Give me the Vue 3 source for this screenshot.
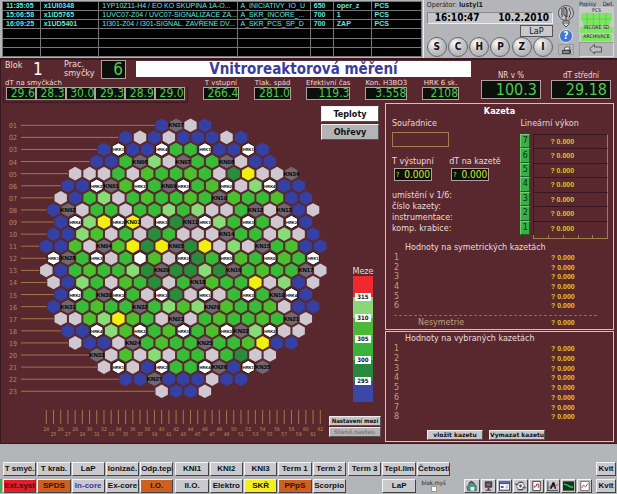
<template>
    <div class="screen">
        <header class="top">
            <table class="alarms">
                <colgroup>
                    <col v-for="(w, i) in alarmCols" :key="i" :style="{ width: w + '%' }" />
                </colgroup>
                <tbody>
                    <tr v-for="(row, r) in alarms" :key="r">
                        <td v-for="(cell, c) in row" :key="c">{{ cell }}</td>
                    </tr>
                </tbody>
            </table>

            <div class="operator">
                <p class="operator-name">Operátor: <b>lustyl1</b></p>
                <div class="clock"><span>16:10:47</span><span>10.2.2010</span></div>
                <button class="lap" type="button">LaP</button>
                <div class="rounds">
                    <button v-for="l in 'SCHPZI'" :key="l" type="button" class="round">{{ l }}</button>
                </div>
            </div>

            <div class="tools">
                <button type="button" class="tool" aria-label="Alarm">
                    <svg width="18" height="24" viewBox="0 0 18 24">
                        <circle cx="9" cy="9" r="7.5" fill="#c4c4c6" stroke="#555" />
                        <path d="M5 4v9M7 3l3 3v7l-3-2zM12 4q3 5 0 10M9 3v13" fill="#f4f4f4" stroke="#333" />
                        <path d="M6 17h6v3l-3 3-3-3z" fill="#d8d8d8" stroke="#555" />
                        <path d="M6 19h6" stroke="#555" />
                    </svg>
                </button>
                <button type="button" class="help" aria-label="Help">?</button>
                <button type="button" class="tool printer" aria-label="Print">
                    <svg width="15" height="11" viewBox="0 0 15 11">
                        <path d="M5 5l1-3h5l-1 3z" fill="#eee" stroke="#333" stroke-width=".7" />
                        <path d="M3 5h8l1-1v4l-1 1H3z" fill="#444" />
                        <path d="M4 7h6" stroke="#ccc" />
                    </svg>
                </button>
            </div>

            <div class="status">
                <div class="status-head"><span>Popisy</span><span>Det.</span></div>
                <div class="status-box">
                    <svg viewBox="0 0 34 35" preserveAspectRatio="none">
                        <rect width="34" height="35" fill="#c8cac8" />
                        <path d="M2 6h30v6l-3 7H5l-3-7zM1 20h32v6H1zM2 28h30v6H2z" fill="#7ce860" />
                        <path d="M8 6v13M14 6v13M20 6v13M26 6v13M3 12h28" stroke="#6cc858" />
                        <text x="17" y="5">PCS</text>
                        <text x="17" y="22">INCORE SD</text>
                        <text x="17" y="31">ARCHIVACE</text>
                    </svg>
                </div>
                <button type="button" class="back" aria-label="Back">
                    <svg width="16" height="12" viewBox="0 0 16 12">
                        <path d="M1.500 6l5-4.500v2.500h7v5h-7v2z" fill="#bcbcc0" stroke="#555" />
                    </svg>
                </button>
            </div>
        </header>

        <main class="main">
            <section class="stats">
                <div class="stats-left">
                    <div class="title-row">
                        <span class="block">Blok</span>
                        <span class="block-no">1</span>
                        <span class="loops">Prac.<br />smyčky</span>
                        <span class="loops-no">6</span>
                        <h1>Vnitroreaktorová měření</h1>
                    </div>
                    <div class="value-row">
                        <div class="loop-group">
                            <p>dT na smyčkách</p>
                            <div class="loop-frame">
                                <span v-for="(v, i) in loopTemps" :key="i">{{ v }}</span>
                            </div>
                        </div>
                        <div v-for="s in smallStats" :key="s.label" class="small-stat">
                            <p>{{ s.label }}</p>
                            <span>{{ s.value }}</span>
                        </div>
                    </div>
                </div>
                <div v-for="s in bigStats" :key="s.label" class="big-stat">
                    <p>{{ s.label }}</p>
                    <span>{{ s.value }}</span>
                </div>
            </section>

            <div class="body">
                <section class="left">
                    <svg class="core" viewBox="0 105 318 337">
                        <g class="row-labels">
                            <template v-for="row in rows" :key="row.label">
                                <text x="8" :y="row.y + 3">{{ row.label }}</text>
                                <line x1="20" :x2="row.lineEnd" :y1="row.y" :y2="row.y" />
                            </template>
                        </g>
                        <g class="col-labels">
                            <template v-for="col in cols" :key="col.n">
                                <line :x1="col.x" :x2="col.x" y1="410" y2="424" />
                                <text :x="col.x" :y="col.n % 2 ? 436 : 431">{{ col.n }}</text>
                            </template>
                        </g>
                        <g v-for="cell in cells" :key="cell.id" :transform="`translate(${cell.x} ${cell.y})`">
                            <polygon
                                points="0,-6.8 6.2,-3.4 6.2,3.4 0,6.8 -6.2,3.4 -6.2,-3.4"
                                :class="['hex', cell.kind]"
                            />
                            <text v-if="cell.text" y="2" :class="cell.textClass">{{ cell.text }}</text>
                        </g>
                    </svg>

                    <div class="side">
                        <div class="modes">
                            <button type="button" class="mode active">Teploty</button>
                            <button type="button" class="mode">Ohřevy</button>
                        </div>
                        <div class="limits">
                            <p>Meze</p>
                            <div class="scale">
                                <div v-for="s in scale" :key="s.kind" :class="['segment', s.kind]">
                                    <span v-if="s.limit">{{ s.limit }}</span>
                                </div>
                            </div>
                        </div>
                        <div class="limit-buttons">
                            <button type="button">Nastavení mezí</button>
                            <button type="button" disabled>Stand.nastav.</button>
                        </div>
                    </div>
                </section>

                <section class="right">
                    <div class="panel cassette">
                        <h2>Kazeta</h2>
                        <div class="cassette-top">
                            <div class="cassette-info">
                                <label for="coord">Souřadnice</label>
                                <input id="coord" type="text" />
                                <div class="outputs">
                                    <div v-for="o in outputs" :key="o">
                                        <p>{{ o }}</p>
                                        <span class="output"><i>?</i>0.000</span>
                                    </div>
                                </div>
                                <ul>
                                    <li>umístění v 1/6:</li>
                                    <li>číslo kazety:</li>
                                    <li>instrumentace:</li>
                                    <li>komp. krabice:</li>
                                </ul>
                            </div>
                            <div class="power">
                                <p>Lineární výkon</p>
                                <div class="power-rows">
                                    <div v-for="n in 7" :key="n" class="power-row">
                                        <button type="button">{{ 8 - n }}</button>
                                        <span class="val">? 0.000</span>
                                    </div>
                                </div>
                                <div class="power-axis"><i v-for="n in 5" :key="n"></i></div>
                            </div>
                        </div>
                        <h3>Hodnoty na symetrických kazetách</h3>
                        <div class="lines six">
                            <div v-for="n in 6" :key="n" class="line">
                                <span>{{ n }}</span><span class="val">? 0.000</span>
                            </div>
                        </div>
                        <div class="line asym">
                            <span>Nesymetrie</span><span class="val">? 0.000</span>
                        </div>
                    </div>

                    <div class="panel selected">
                        <h3>Hodnoty na vybraných kazetách</h3>
                        <div class="lines eight">
                            <div v-for="n in 8" :key="n" class="line">
                                <span>{{ n }}</span><span class="val">? 0.000</span>
                            </div>
                        </div>
                        <div class="actions">
                            <button type="button">vložit kazetu</button>
                            <button type="button">Vymazat kazetu</button>
                        </div>
                    </div>
                </section>
            </div>
        </main>

        <footer class="bar">
            <div class="bar-row">
                <div class="group five">
                    <button v-for="b in ['T smyč.', 'T krab.', 'LaP', 'Ionizač.', 'Odp.tepl']" :key="b" type="button">{{ b }}</button>
                </div>
                <div class="group five">
                    <button v-for="b in ['KNI1', 'KNI2', 'KNI3', 'Term 1', 'Term 2']" :key="b" type="button">{{ b }}</button>
                </div>
                <div class="group three">
                    <button v-for="b in ['Term 3', 'Tepl.lim', 'Četnosti']" :key="b" type="button">{{ b }}</button>
                </div>
                <div class="icons"></div>
                <button type="button">Kvit</button>
            </div>
            <div class="bar-row marked">
                <div class="group five">
                    <button type="button" class="alert">Ext.syst</button>
                    <button type="button" class="warn">SPDS</button>
                    <button type="button" class="current">In-core</button>
                    <button type="button">Ex-core</button>
                    <button type="button" class="warn">I.O.</button>
                </div>
                <div class="group five">
                    <button type="button">II.O.</button>
                    <button type="button">Elektro</button>
                    <button type="button" class="notice">SKŘ</button>
                    <button type="button" class="warn">PPpS</button>
                    <button type="button">Scorpio</button>
                </div>
                <div class="group three">
                    <span></span>
                    <button type="button">LaP</button>
                    <label class="block-mouse">blok.myš<input type="checkbox" /></label>
                </div>
                <div class="icons">
                    <button type="button" aria-label="Home">
                        <svg viewBox="0 0 14 12"><path d="M2 7l4-5h3l3 4v5H3z" fill="#4a9a8c" stroke="#244" stroke-width=".7" /><path d="M6 7h4v4H6z" fill="#e8eef0" /><path d="M4 3l3-2 2 2" fill="none" stroke="#222" /></svg>
                    </button>
                    <button type="button" aria-label="Monitor">
                        <svg viewBox="0 0 14 12"><rect x="3" y="1" width="8" height="7" rx="1" fill="#444" /><rect x="5" y="3" width="4" height="3" fill="#b05070" /><path d="M6 8h2v2h2v1H4v-1h2z" fill="#444" /></svg>
                    </button>
                    <button type="button" aria-label="Window">
                        <svg viewBox="0 0 14 12"><rect x="1.500" y="1.500" width="11" height="9" fill="#fff" stroke="#334" /><path d="M1 2h12v2H1z" fill="#3450b0" /><path d="M3 6h3v2H3z" fill="#3450b0" /><path d="M8 6h3M8 8h3" stroke="#999" /></svg>
                    </button>
                    <button type="button" aria-label="Network">
                        <svg viewBox="0 0 14 12"><circle cx="7" cy="6" r="4" fill="#eee" stroke="#333" stroke-dasharray="2 1" /><path d="M1 4h4M9 8h4M4 10h6M5 2h5" stroke="#333" /><circle cx="7" cy="6" r="1.500" fill="#555" /></svg>
                    </button>
                    <button type="button" aria-label="Report">
                        <svg viewBox="0 0 14 12"><path d="M3 1h8v10H3z" fill="#fff" stroke="#333" /><path d="M5 8V6h2V4h2v4" fill="none" stroke="#a33" /></svg>
                    </button>
                    <button type="button" aria-label="Trends">
                        <svg viewBox="0 0 14 12"><path d="M1 11h12M2 1v10" stroke="#246" /><path d="M4 9l3-7h2l2 7H9V7H7L6 9z" fill="#111" /><path d="M2 9q3-5 5-3t6-2" fill="none" stroke="#d33" /></svg>
                    </button>
                    <button type="button" aria-label="Graph">
                        <svg viewBox="0 0 14 12"><rect x="1" y="1" width="12" height="10" fill="#103818" /><path d="M2 4l4 1 3 2h3" fill="none" stroke="#40c060" stroke-width="1.500" /></svg>
                    </button>
                    <button type="button" aria-label="Chart">
                        <svg viewBox="0 0 14 12"><path d="M3 1h9v10H3z" fill="#fff" stroke="#666" /><path d="M4 8l2-3 2 2 3-4" fill="none" stroke="#c44" /></svg>
                    </button>
                </div>
                <button type="button">Kvit</button>
            </div>
        </footer>
    </div>
</template>

<script setup>
const alarmCols = [9, 14, 33, 17.5, 5.5, 9, 12];

const empty = ['', '', '', '', '', '', ''];
const alarms = [
    ['11:35:05', 'x1UI0348', '1YP10Z11-H4 / EO KO SKUPINA 1A-O...', 'A_INICIATIVY_IO_U', '650', 'oper_z', 'PCS'],
    ['15:06:58', 'x1ID5765', '1UVC07-Z04 / UVC07-SIGNALIZACE ZA...', 'A_SKR_INCORE_...', '700', '1', 'PCS'],
    ['16:09:25', 'x1UD5401', '1I301-Z04 / I301-SIGNAL. ZAVŘENÉ DV...', 'A_SKR_PCS_SP_D', '700', 'ZAP', 'PCS'],
    empty,
    empty,
    empty,
];

const loopTemps = ['29.6', '28.3', '30.0', '29.3', '28.9', '29.0'];

const smallStats = [
    { label: 'T vstupní', value: '266.4' },
    { label: 'Tlak. spád', value: '281.0' },
    { label: 'Efektivní čas', value: '119.3' },
    { label: 'Kon. H3BO3', value: '3.558' },
    { label: 'HRK 6 sk.', value: '2108' },
];

const bigStats = [
    { label: 'NR v %', value: '100.3' },
    { label: 'dT střední', value: '29.18' },
];

const outputs = ['T výstupní', 'dT na kazetě'];

const scale = [
    { kind: 'over', limit: 315 },
    { kind: 'light', limit: 310 },
    { kind: 'mid', limit: 305 },
    { kind: 'normal', limit: 300 },
    { kind: 'dark', limit: 295 },
    { kind: 'low' },
];

// First column of each row, then its cells: K = KNI probe, H = control rod group
const layout = [
    [40, 'b K37 w b'],
    [35, 'b w b w b b b w b'],
    [32, 'b H1 b b H4 g g H1 b b H1 b'],
    [31, 'b b g K06 l w K07 g g K08 w b b'],
    [28, 'w w w g w g g g g g w d y w w K34'],
    [27, 'b b H2 K01 g H2 g K09 H3 g g H2 w l H4 b b'],
    [26, 'w b g l w g g g g g g K10 g g g g b b'],
    [25, 'b K02 w g g w g g l g l w w g K12 w K13 b w'],
    [26, 'b H4 l y H2 Y03 w H3 d K11 H1 l g H3 g w H2 b'],
    [25, 'b b l g w g w d g w w w K14 g g w l w b'],
    [24, 'b b g w K04 g y d y K05 d y w l w K15 g g b b'],
    [25, 'H1 K28 g H3 w g H g w H3 d g H5 g g H6 g g H1'],
    [24, 'w b g g g g l d K29 d d l d K16 g g g g K17 w'],
    [25, 'w b l g w g g d w g K18 g g g y w l b w'],
    [26, 'b H2 g K30 H3 g w H3 d w H1 w g H3 g K19 H4 b'],
    [25, 'b K31 g g g g K32 g l g l K20 g g g g w b b'],
    [26, 'w w g l y g g w K23 w g g g g g g K21 w'],
    [27, 'b b H4 l g H2 g g H3 g g H2 K22 l H2 w w'],
    [28, 'w b b w K24 g g g g K25 g g g y b b'],
    [31, 'K33 w g w l w g g w g d w w'],
    [32, 'w H1 w b H2 g g H4 K26 b H1 K35'],
    [35, 'b b K27 b b b w b b'],
    [40, 'w b b w'],
];

const kinds = { b: 'low', w: 'none', g: 'normal', l: 'light', d: 'dark', y: 'yellow', K: 'probe', Y: 'yellow', H: 'rod' };

const colX = (n) => 45.3 + (n - 24) * 7.21;
const rowY = (i) => 125.3 + i * 12.09;

const rows = layout.map(([first], i) => ({
    label: String(i + 1).padStart(2, '0'),
    y: rowY(i),
    lineEnd: colX(first) - 7,
}));

const cols = Array.from({ length: 39 }, (_, i) => ({ n: i + 24, x: colX(i + 24) }));

const cellText = (token) => {
    if (token.length < 2) return '';
    return token[0] === 'H' ? 'HRK' + token.slice(1) : 'KN' + token.slice(1);
};

const cells = layout.flatMap(([first, list], r) =>
    list.split(' ').map((token, i) => ({
        id: r + '-' + i,
        x: colX(first + i * 2),
        y: rowY(r),
        kind: kinds[token[0]] + ((r + i) % 3 === 0 && token === 'g' ? ' mid' : ''),
        text: cellText(token),
        textClass: token[0] === 'H' ? 'rod-text' : 'probe-text',
    }))
);
</script>

<style>
body {
    margin: 0;
}
</style>

<style scoped>
.screen {
    display: flex;
    flex-direction: column;
    min-height: 100vh;
    background: #b4b5b9;
    font-family: "DejaVu Sans Condensed", "Noto Sans", sans-serif;
    font-size: 8px;
    line-height: 10px;
    color: #e8dcdc;
}

.screen * {
    box-sizing: border-box;
}

p, h1, h2, h3, ul {
    margin: 0;
    padding: 0;
    font-weight: normal;
    font-size: inherit;
    list-style: none;
}

button {
    margin: 0;
    padding: 0;
    font-family: inherit;
    color: #111;
    background: #c6c6ca;
    border: 1px solid;
    border-color: #eee #555 #555 #eee;
    white-space: nowrap;
    overflow: hidden;
}

/* Header */
.top {
    display: grid;
    grid-template-columns: 421fr 130fr 24px 38px;
    gap: 1px;
    height: 58px;
    color: #222;
}

.alarms {
    table-layout: fixed;
    width: calc(100% - 2px);
    height: 56px;
    margin: 1px 0 0 2px;
    border-collapse: collapse;
    background: #000;
    color: #60e8e0;
    font-family: "Liberation Sans", sans-serif;
    font-size: 7px;
    line-height: 8px;
}

.alarms td {
    height: 9px;
    padding: 0 3px;
    border: 1px solid #777;
    white-space: nowrap;
    overflow: hidden;
}

.alarms td:nth-child(n + 5),
.alarms td:nth-child(-n + 2) {
    font-weight: bold;
}

.operator {
    display: flex;
    flex-direction: column;
    padding-left: 3px;
    border-left: 1px solid #eee;
}

.operator-name {
    font-size: 7px;
    line-height: 9px;
    padding-top: 1px;
}

.clock {
    display: flex;
    justify-content: space-between;
    padding: 0 3px 0 7px;
    margin-top: 2px;
    border: 1px solid;
    border-color: #888 #eee #eee #888;
    background: #c6c6ca;
    color: #000;
    font-size: 10px;
    line-height: 10px;
    font-weight: bold;
}

.lap {
    align-self: flex-end;
    width: 33px;
    height: 12px;
    margin-top: 1px;
    font-size: 9px;
    line-height: 9px;
    background: #cacace;
    border-color: #555;
}

.rounds {
    display: flex;
    justify-content: space-between;
}

.round {
    width: 20px;
    height: 20px;
    border: 1px solid #666;
    border-radius: 50%;
    background: radial-gradient(circle at 35% 30%, #fff, #c4c4c6 45%, #a8a8ac);
    font-size: 10px;
    font-weight: bold;
    line-height: 10px;
}

.tools {
    display: flex;
    flex-direction: column;
    align-items: center;
    gap: 1px;
    padding-top: 4px;
}

.tool {
    background: none;
    border: 0;
}

.tool svg {
    display: block;
}

.printer {
    border: 1px solid #999;
    width: 16px;
    height: 11px;
}

.help {
    width: 14px;
    height: 14px;
    border: 1px solid #dde;
    border-radius: 50%;
    background: #3c78d0;
    color: #fff;
    font-size: 10px;
    font-weight: bold;
    line-height: 10px;
}

.status {
    display: flex;
    flex-direction: column;
    padding-right: 3px;
}

.status-head {
    display: flex;
    justify-content: space-between;
    font-size: 6px;
    line-height: 7px;
}

.status-box {
    height: 35px;
}

.status-box svg {
    display: block;
    width: 100%;
    height: 100%;
}

.status-box text {
    font-size: 5px;
    text-anchor: middle;
    fill: #222;
}

.back {
    height: 15px;
    border-color: #999 #ddd #ddd #999;
    background: #b4b5b9;
    text-align: center;
}

/* Main */
.main {
    padding-bottom: 1px;
    background: #59282f;
    border: 1px solid #381820;
    border-top: 2px solid #381820;
    border-right: 0;
}

.stats {
    display: grid;
    grid-template-columns: 473fr 60px 60px;
    gap: 10px;
    padding-right: 6px;
    height: 43px;
}

.title-row {
    display: flex;
    align-items: flex-start;
    padding-left: 4px;
    font-size: 9px;
}

.block {
    width: 28px;
}

.block-no {
    width: 31px;
    padding-top: 1px;
    font-size: 17px;
    line-height: 17px;
    color: #fff;
}

.loops {
    width: 37px;
    line-height: 9px;
}

.loops-no {
    width: 25px;
    height: 19px;
    padding-right: 2px;
    font-size: 17px;
    line-height: 17px;
}

.title-row h1 {
    flex: 1;
    margin: 1px 0 0 10px;
    background: #fff;
    color: #3c3c9c;
    font-size: 15px;
    line-height: 16px;
    font-weight: bold;
    text-align: center;
}

.loops-no,
.loop-frame span,
.small-stat span,
.big-stat span {
    display: block;
    background: #0c100c;
    border: 1px solid #b0a0a0;
    color: #50c850;
    text-align: right;
}

.value-row {
    display: grid;
    grid-template-columns: 191fr repeat(5, 38fr);
    gap: 15px;
    padding: 0 12px 0 2px;
    font-size: 7px;
    line-height: 8px;
}

.value-row p,
.big-stat p {
    white-space: nowrap;
}

.value-row p {
    font-family: "DejaVu Sans", sans-serif;
}

.loop-group p {
    padding-left: 2px;
}

.loop-frame {
    display: grid;
    grid-template-columns: repeat(6, 1fr);
    padding: 0 2px 2px;
    border: 1px solid #381820;
    border-top: 0;
}

.loop-frame span,
.small-stat span {
    height: 13px;
    font-size: 12px;
    line-height: 11px;
}

.small-stat p {
    display: flex;
    justify-content: center;
}

.big-stat p {
    padding-top: 11px;
    text-align: center;
    line-height: 9px;
}

.big-stat span {
    height: 19px;
    padding-right: 3px;
    font-size: 16px;
    line-height: 17px;
}

.body {
    display: grid;
    grid-template-columns: 384fr 232fr;
}

.left {
    display: grid;
    grid-template-columns: 318fr 66fr;
    padding-top: 2px;
}

.core {
    display: block;
    width: 100%;
    overflow: visible;
}

.row-labels text {
    font-size: 7px;
    fill: #b08868;
}

.row-labels line,
.col-labels line {
    stroke: #a07848;
}

.col-labels text {
    font-size: 5px;
    text-anchor: middle;
    fill: #b89058;
}

.hex.low { fill: #3440a4; }
.hex.none { fill: #d0c8d0; }
.hex.normal { fill: #38bc38; }
.hex.mid { fill: #4cc02c; }
.hex.light { fill: #88dc78; }
.hex.dark { fill: #288c3c; }
.hex.yellow { fill: #f0f010; }
.hex.probe { fill: #706870; }
.hex.rod { fill: #fff; stroke: #181010; }

.probe-text,
.rod-text {
    font-family: "Liberation Sans", sans-serif;
    font-weight: bold;
    text-anchor: middle;
    fill: #000;
}

.probe-text { font-size: 6px; }
.rod-text { font-size: 4px; }

.side {
    display: flex;
    flex-direction: column;
    justify-content: space-between;
    align-items: center;
    position: relative;
    padding: 1px 4px 5px 0;
}

.modes {
    display: flex;
    flex-direction: column;
    gap: 2px;
    width: 58px;
}

.mode {
    height: 16px;
    font-size: 9px;
    line-height: 12px;
    font-weight: bold;
    background: #b4b4b8;
}

.mode.active {
    background: #fff;
}

.limits {
    display: flex;
    flex-direction: column;
    align-items: center;
    padding: 112px 0 0 26px;
}

.limits p {
    font-size: 9px;
}

.scale {
    width: 20px;
}

.segment {
    position: relative;
    height: 21px;
}

.segment span {
    position: absolute;
    z-index: 1;
    left: 2px;
    right: 2px;
    bottom: -4px;
    background: #fff;
    color: #111;
    font-size: 6px;
    line-height: 8px;
    font-weight: bold;
    text-align: center;
}

.segment.over { background: #f02830; }
.segment.light { background: #88d878; }
.segment.mid { background: #4cb838; }
.segment.normal { background: #38b438; }
.segment.dark { background: #288840; }
.segment.low { background: #3c48a8; }

.limit-buttons {
    display: flex;
    flex-direction: column;
    align-self: flex-end;
    gap: 1px;
    width: 52px;
}

.limit-buttons button,
.actions button {
    height: 10px;
    font-size: 6px;
    line-height: 8px;
    font-weight: bold;
}

.limit-buttons button:disabled {
    color: #808084;
    background: #b4b4b8;
}

/* Right panels */
.right {
    display: flex;
    flex-direction: column;
    gap: 1px;
    padding-right: 3px;
    font-family: "DejaVu Sans", sans-serif;
}

.panel {
    border: 1px solid #d0c0c4;
}

.cassette {
    height: 227px;
}

.cassette h2 {
    padding-top: 2px;
    font-family: "DejaVu Sans Condensed", "Noto Sans", sans-serif;
    font-size: 9px;
    font-weight: bold;
    text-align: center;
    color: #fff;
}

.cassette-top {
    display: grid;
    grid-template-columns: 129fr 88fr;
    padding: 3px 5px 0 6px;
}

.cassette-info label {
    display: block;
}

.cassette-info input {
    display: block;
    width: 57px;
    height: 15px;
    margin-top: 3px;
    padding: 0 2px;
    border: 1px solid #a08048;
    background: none;
    color: #e8dcdc;
    font: inherit;
}

.outputs {
    display: grid;
    grid-template-columns: 1fr 1fr;
    margin-top: 10px;
    padding-right: 14px;
    white-space: nowrap;
}

.output {
    display: flex;
    justify-content: space-between;
    align-items: center;
    width: 38px;
    height: 13px;
    margin: 1px 0 0 2px;
    padding: 0 1px;
    border: 1px solid #b0a0a0;
    background: #0c100c;
    color: #d8e830;
    font-family: "DejaVu Sans Condensed", "Noto Sans", sans-serif;
    font-size: 10px;
}

.output i {
    font-size: 7px;
    font-style: normal;
}

.cassette-info ul {
    margin-top: 9px;
    line-height: 11px;
}

.power p {
    margin-bottom: 5px;
    white-space: nowrap;
}

.power-rows {
    display: flex;
    flex-direction: column;
    height: 101px;
}

.power-row {
    display: flex;
    flex: 1;
    gap: 3px;
    line-height: 13px;
}

.power-row button {
    width: 10px;
    background: #38b048;
    border-color: #70d070 #206028 #206028 #70d070;
    color: #083010;
    font-size: 8px;
    line-height: 12px;
}

.power-row .val {
    flex: 1;
    padding-left: 16px;
    border: 1px solid #381820;
    border-right-color: #a08048;
    border-bottom: 0;
}

.power-axis {
    display: flex;
    height: 4px;
    margin: 0 0 0 13px;
    border: solid #a08048;
    border-width: 0 0 1px 1px;
}

.power-axis i {
    flex: 1;
    border-right: 1px solid #a08048;
}

.val {
    color: #e0c820;
    font-family: "Liberation Sans", sans-serif;
    font-size: 7px;
    font-weight: bold;
}

.panel h3 {
    padding: 4px 0 0 19px;
}

.lines {
    display: flex;
    flex-direction: column;
    line-height: 9px;
}

.lines .line {
    flex: 1;
    min-height: 0;
}

.six { height: 58px; }
.eight { height: 78px; }

.line {
    display: grid;
    grid-template-columns: 157fr 62fr;
    margin: 0 0 0 8px;
    color: #c0a078;
}

.asym {
    margin-top: 4px;
    margin-right: 16px;
    height: 14px;
    line-height: 14px;
    grid-template-columns: 157fr 46fr;
    border-top: 1px dashed #906858;
}

.asym span:first-child {
    padding-left: 24px;
}

.selected {
    flex: 1;
}

.panel.selected h3 {
    padding-top: 2px;
}

.actions {
    display: flex;
    gap: 6px;
    padding: 8px 0 0 41px;
}

.actions button {
    width: 56px;
}

/* Bottom bar */
.bar {
    display: flex;
    flex-direction: column;
    gap: 3px;
    margin-top: auto;
    padding: 0 1px 1px 0;
    color: #222;
}

.bar-row {
    display: grid;
    grid-template-columns: 171fr 171fr 103fr 142fr 20px;
    column-gap: 2px;
    height: 14px;
    padding-left: 3px;
}

.marked {
    padding-left: 1px;
    border-left: 2px solid #40b050;
}

.group {
    display: grid;
    gap: 1px;
}

.five { grid-template-columns: repeat(5, minmax(0, 1fr)); }
.three { grid-template-columns: repeat(3, minmax(0, 1fr)); }

.bar button {
    font-family: "Liberation Sans", sans-serif;
    font-size: 8px;
    line-height: 12px;
    font-weight: bold;
    background: #cacace;
    border-color: #f4f4f4 #444 #444 #f4f4f4;
    min-width: 0;
}

.bar .alert { background: #e02028; color: #500808; }
.bar .warn { background: #d06020; color: #301008; }
.bar .notice { background: #f4f020; }
.bar .current { color: #3838a8; }

.block-mouse {
    display: flex;
    flex-direction: column;
    align-items: center;
    font-size: 6px;
    line-height: 7px;
}

.block-mouse input {
    width: 6px;
    height: 6px;
    margin: 0;
    appearance: none;
    background: #fff;
    border: 1px solid #999;
}

.icons {
    display: grid;
    grid-template-columns: repeat(8, minmax(0, 1fr));
    gap: 1px;
    padding: 0 2px 0 12px;
}

.icons svg {
    display: block;
    width: 100%;
    height: 12px;
}
</style>
